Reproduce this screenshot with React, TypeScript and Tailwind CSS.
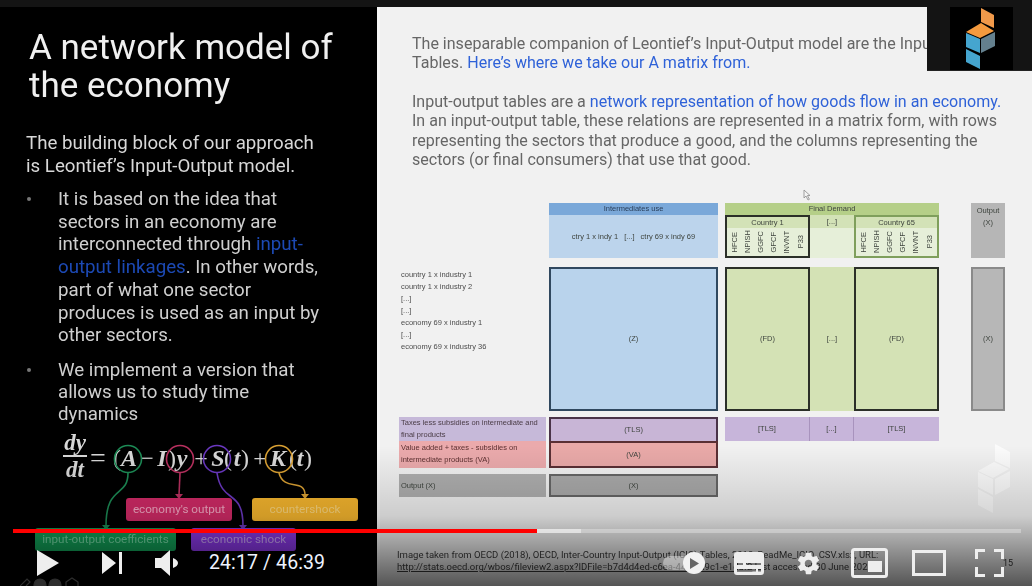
const sans = "font-['Roboto','Liberation_Sans',sans-serif]";

const demandCodes = ["HFCE", "NPISH", "GGFC", "GFCF", "INVNT", "P33"];

// each glyph is a zero-width box so the letters line up with the circles drawn over them
const equationGlyphs = [
  { text: "=", className: "ml-[11px] not-italic font-normal text-[28px]" },
  { text: "(", className: "ml-[19px] not-italic font-normal" },
  { text: "A", className: "ml-[12px]" },
  { text: "−", className: "ml-[18px] not-italic font-normal" },
  { text: "I", className: "ml-[15px]" },
  { text: ")", className: "ml-[10px] not-italic font-normal" },
  { text: "y", className: "ml-[10px]" },
  { text: "+", className: "ml-[19px] not-italic font-normal" },
  { text: "S", className: "ml-[17px]" },
  { text: "(", className: "ml-[10px] not-italic font-normal" },
  { text: "t", className: "ml-[9px]" },
  { text: ")", className: "ml-[8px] not-italic font-normal" },
  { text: "+", className: "ml-[15px] not-italic font-normal" },
  { text: "K", className: "ml-[18px]" },
  { text: "(", className: "ml-[15px] not-italic font-normal" },
  { text: "t", className: "ml-[7px]" },
  { text: ")", className: "ml-[8px] not-italic font-normal" },
];

function Bullet({ children }: { children: React.ReactNode }) {
  return (
    <li className="flex mt-3">
      <span className="w-[32px] shrink-0 pl-[1px] pt-[9px]">
        <span className="block w-[4px] h-[4px] rounded-full bg-[#777]" />
      </span>
      <span>{children}</span>
    </li>
  );
}

function Equation() {
  return (
    <div className="flex items-center h-[54px] mt-[6px] ml-[63px] font-['Liberation_Serif',serif] italic font-bold text-[24px] text-[#d8d8d8] leading-none">
      <span className="flex flex-col items-center w-[24px] text-[23px] -mt-[3px]">
        <span className="border-b-2 border-[#d8d8d8] w-full text-center pb-[1px]">dy</span>
        <span className="pt-[1px]">dt</span>
      </span>
      {equationGlyphs.map((glyph, i) => (
        <span key={i} className={`w-0 flex justify-center ${glyph.className}`}>
          {glyph.text}
        </span>
      ))}
    </div>
  );
}

function Annotations() {
  return (
    <>
      <svg className="absolute left-0 top-0" width="377" height="579" viewBox="0 7 377 579" fill="none" strokeWidth="1.6">
        <g stroke="#1c8a55">
          <circle cx="128" cy="459" r="13.5" />
          <path d="M128 473C128 498 106 484 106 526" />
        </g>
        <path d="M102 525h8l-4 5z" fill="#1c8a55" />
        <g stroke="#b8305f">
          <circle cx="180" cy="459" r="13.5" />
          <path d="M180 473L179 495" />
        </g>
        <path d="M175 494h8l-4 5z" fill="#b8305f" />
        <g stroke="#6a38c0">
          <circle cx="217" cy="459" r="13.5" />
          <path d="M217 473C222 505 243 488 243 526" />
        </g>
        <path d="M239 525h8l-4 5z" fill="#6a38c0" />
        <g stroke="#d9a033">
          <circle cx="279" cy="459" r="13.5" />
          <path d="M279 473C284 492 305 478 305 495" />
        </g>
        <path d="M301 494h8l-4 5z" fill="#d9a033" />
      </svg>
      <div className="absolute left-[126px] top-[491px] w-[106px] h-[23px] rounded-[3px] bg-[#d02a66] text-[#f4aac4] text-[11.7px] leading-[23px] text-center">economy's output</div>
      <div className="absolute left-[252px] top-[491px] w-[106px] h-[23px] rounded-[3px] bg-[#f6b62e] text-[#fbd67e] text-[11.7px] leading-[23px] text-center">countershock</div>
      <div className="absolute left-[35px] top-[521px] w-[141px] h-[23px] rounded-[3px] bg-[#12a058] text-[#74d8a4] text-[11.7px] leading-[23px] text-center">input-output coefficients</div>
      <div className="absolute left-[191px] top-[521px] w-[105px] h-[23px] rounded-[3px] bg-[#8a38e6] text-[#c8a4f4] text-[11.7px] leading-[23px] text-center">economic shock</div>
    </>
  );
}

function LeftSlide() {
  return (
    <div className={`relative w-[377px] shrink-0 bg-black pt-[22px] blur-[0.4px] ${sans}`}>
      <h1 className="pl-[29px] text-[35px] leading-[38px] text-[#f0f0f0] font-normal">
        A network model of
        <br />
        the economy
      </h1>
      <p className="mt-[27px] pl-[26px] text-[18.7px] leading-[22.5px] text-[#d8d8d8]">
        The building block of our approach
        <br />
        is Leontief’s Input-Output model.
      </p>
      <ul className="-mt-[1px] pl-[26px] pr-[40px] text-[18.7px] leading-[22.7px] text-[#cfcfcf]">
        <Bullet>
          It is based on the idea that
          <br />
          sectors in an economy are
          <br />
          interconnected through <span className="text-[#1c49b4]">input-</span>
          <br />
          <span className="text-[#1c49b4]">output linkages</span>. In other words,
          <br />
          part of what one sector
          <br />
          produces is used as an input by
          <br />
          other sectors.
        </Bullet>
        <Bullet>
          <span className="block leading-[22px]">
            We implement a version that
            <br />
            allows us to study time
            <br />
            dynamics
          </span>
        </Bullet>
      </ul>
      <Equation />
      <Annotations />
    </div>
  );
}

function MatrixCell({ className, children }: { className: string; children?: React.ReactNode }) {
  return <div className={`flex items-center justify-center ${className}`}>{children}</div>;
}

function CountryHead({ name, frame }: { name: string; frame: string }) {
  return (
    <div className={`w-[85px] h-full flex flex-col border-2 ${frame} bg-[#e6efd9]`}>
      <div className="h-[11px] bg-[#d3e2b7] text-center leading-[11px]">{name}</div>
      <div className="flex-1 flex justify-around px-[1px] items-center">
        {demandCodes.map((code) => (
          <span key={code} className="[writing-mode:vertical-rl] rotate-180 leading-none">
            {code}
          </span>
        ))}
      </div>
    </div>
  );
}

function Diagram() {
  return (
    <div className="ml-[19px] mt-[33.5px] grid grid-cols-[147px_3px_169px_7px_214px_32px_34px] grid-rows-[55px_9px_144px_6px_24px_27px_6px_23px] text-[7.5px] text-[#3c423c] font-['Liberation_Sans',sans-serif]">
      <div className="col-start-3 row-start-1 flex flex-col bg-[#bcd4ec]">
        <div className="h-[12px] bg-[#7aa8d9] text-center leading-[12px] text-[#2a3f5a]">Intermediates use</div>
        <div className="flex-1 flex items-center justify-center gap-[6px]">
          <span>ctry 1 x indy 1</span>
          <span>[...]</span>
          <span>ctry 69 x indy 69</span>
        </div>
      </div>

      <div className="col-start-5 row-start-1 flex flex-col">
        <div className="h-[12px] bg-[#b5cf88] text-center leading-[12px]">Final Demand</div>
        <div className="flex-1 flex">
          <CountryHead name="Country 1" frame="border-[#2b2f28]" />
          <div className="flex-1 flex flex-col bg-[#e6efd9]">
            <div className="h-[13px] bg-[#d3e2b7] text-center leading-[13px]">[...]</div>
          </div>
          <CountryHead name="Country 65" frame="border-[#7f9f5c]" />
        </div>
      </div>

      <div className="col-start-7 row-start-1 bg-[#b6b6b6] flex flex-col items-center pt-[2px] leading-[12px]">
        <span>Output</span>
        <span>(X)</span>
      </div>

      <div className="col-start-1 row-start-3 pl-[2px] pt-[2px] leading-[12px] text-[#4c4c4c]">
        <div>country 1 x industry 1</div>
        <div>country 1 x industry 2</div>
        <div>[...]</div>
        <div>[...]</div>
        <div>economy 69 x industry 1</div>
        <div>[...]</div>
        <div>economy 69 x industry 36</div>
      </div>
      <MatrixCell className="col-start-3 row-start-3 bg-[#b9d3ec] border-2 border-[#30485f]">(Z)</MatrixCell>
      <div className="col-start-5 row-start-3 flex bg-[#d4e2b5]">
        <MatrixCell className="w-[85px] border-2 border-[#2b2f28]">(FD)</MatrixCell>
        <MatrixCell className="flex-1">[...]</MatrixCell>
        <MatrixCell className="w-[85px] border-2 border-[#2b2f28]">(FD)</MatrixCell>
      </div>
      <MatrixCell className="col-start-7 row-start-3 bg-[#b7b7b7] border-2 border-[#8a8a8a]">(X)</MatrixCell>

      <div className="col-start-1 row-start-5 bg-[#c6b9d9] pl-[2px] leading-[12px] text-[#4a3c46]">
        Taxes less subsidies on intermediate and final products
      </div>
      <MatrixCell className="col-start-3 row-start-5 bg-[#c8b5d6] border-2 border-b-0 border-[#4a3348]">(TLS)</MatrixCell>
      <div className="col-start-5 row-start-5 flex bg-[#c7b5da] divide-x divide-[#a893bd]">
        <MatrixCell className="w-[85px]">[TLS]</MatrixCell>
        <MatrixCell className="flex-1">[...]</MatrixCell>
        <MatrixCell className="w-[85px]">[TLS]</MatrixCell>
      </div>

      <div className="col-start-1 row-start-6 bg-[#ebaaac] pl-[2px] pt-[1px] leading-[12px] text-[#5c3030]">
        Value added + taxes - subsidies on intermediate products (VA)
      </div>
      <MatrixCell className="col-start-3 row-start-6 bg-[#e9a9a8] border-2 border-[#5a2f34]">(VA)</MatrixCell>

      <div className="col-start-1 row-start-8 bg-[#aeaeae] pl-[2px] leading-[23px]">Output (X)</div>
      <MatrixCell className="col-start-3 row-start-8 bg-[#a9a9a9] border-2 border-[#666]">(X)</MatrixCell>
    </div>
  );
}

function RightSlide() {
  return (
    <div className={`relative flex-1 bg-[#f1f1f1] border-l-[3px] border-[#f8f8f8] ${sans}`}>
      <div className="blur-[0.35px]">
        <div className="pl-[32px] pt-[27px] text-[16.05px] leading-[19.3px] text-[#666]">
          <p>
            The inseparable companion of Leontief’s Input-Output model are the Input-Output
            <br />
            Tables. <span className="text-[#2f62d8]">Here’s where we take our A matrix from.</span>
          </p>
          <p className="mt-[19.5px]">
            Input-output tables are a <span className="text-[#2f62d8]">network representation of how goods flow in an economy.</span>
            <br />
            In an input-output table, these relations are represented in a matrix form, with rows
            <br />
            representing the sectors that produce a good, and the columns representing the
            <br />
            sectors (or final consumers) that use that good.
          </p>
        </div>
        <Diagram />
      </div>

      <div className="absolute left-[17px] top-[542px] w-[640px] text-[9.5px] leading-[12px] text-[#3c3c3c] whitespace-nowrap blur-[0.4px]">
        <div>Image taken from OECD (2018), OECD, Inter-Country Input-Output (ICIO) Tables, 2018, ReadMe_ICIO_CSV.xlsx, URL:</div>
        <div>
          <span className="underline">http://stats.oecd.org/wbos/fileview2.aspx?IDFile=b7d4d4ed-c6ea-44a0-a9c1-e1daf2</span>
          <span> last accessed 30 June 2020</span>
        </div>
      </div>
      <span className="absolute left-[623px] top-[550px] text-[9px] text-[#333] blur-[0.4px]">15</span>

      <svg className="absolute left-[595px] top-[437px]" width="40" height="76" viewBox="975 444 40 76" fill="#fff" fillOpacity="0.72">
        <path d="M995 444l15 8v16l-15-7z" />
        <path d="M978 471l16-9 15 7-16 9z" />
        <path d="M978 472l15 7v16l-15-8z" />
        <path d="M995 479l15-8v16l-15 8z" />
        <path d="M978 489l15 8v16l-15-8z" />
      </svg>

      <svg className="absolute left-[423px] top-[182px]" width="9" height="12" viewBox="0 0 9 12" fill="#f4f4f4" stroke="#8a8a8a" strokeWidth="0.8">
        <path d="M1 1v8l2-2 2 4 1.4-.7-2-3.8H7z" />
      </svg>
    </div>
  );
}

function LogoBadge() {
  return (
    <div className="absolute right-0 top-[7px] w-[105px] h-[64px] bg-[#141414] border-b border-[#222]">
      <div className="ml-[23px] w-[63px] h-full bg-black">
        <svg width="63" height="63" viewBox="950 7 63 63">
          <path d="M981 8l13 7v13l-13-6z" fill="#f0994a" />
          <path d="M966 32l15-9 13 8-14 7z" fill="#f49a3e" />
          <path d="M966 33l14 6v14l-14-6z" fill="#45a5cf" />
          <path d="M981 39l14-7v14l-14 7z" fill="#64808e" />
          <path d="M966 49l14 7v13l-14-7z" fill="#45a5cf" />
        </svg>
      </div>
    </div>
  );
}

function PlayerControls() {
  return (
    <div className="absolute left-0 bottom-0 w-full font-['Roboto','Liberation_Sans',sans-serif]">
      <div className="h-[140px] bg-gradient-to-b from-black/0 via-black/15 to-black/65 absolute left-0 right-0 bottom-0" />
      <svg className="absolute left-[20px] bottom-0" width="66" height="9" viewBox="0 0 66 9" fill="none" stroke="#2e2e2e" strokeWidth="1.2">
        <path d="M0 9l7-7 3 3-4 4" />
        <circle cx="20" cy="8" r="6" fill="#2e2e2e" />
        <circle cx="35" cy="8" r="6" fill="#2e2e2e" />
        <path d="M46 9v-4l6-4 6 4v4" />
      </svg>
      <div className="relative ml-[13px] mr-[11px] flex h-[4px] bg-white/30 mb-[11px]">
        <div className="w-[524px] bg-[#ff0000]" />
        <div className="w-[44px] bg-white/45" />
      </div>
      <div className="relative h-[38px] flex items-center text-[#eee]">
        <svg className="ml-[37px]" width="22" height="26" viewBox="0 0 22 26" fill="#eee">
          <path d="M0 0l22 13L0 26z" />
        </svg>
        <svg className="ml-[43px]" width="20" height="22" viewBox="0 0 20 22" fill="#eee">
          <path d="M0 0l14 11L0 22zM17 0h3v22h-3z" />
        </svg>
        <svg className="ml-[33px]" width="24" height="26" viewBox="0 0 24 26" fill="#eee">
          <path d="M0 8h6l9-8v26l-9-8H0zM18 8c3 1 5 3 5 5s-2 4-5 5z" />
        </svg>
        <span className="ml-[30px] w-[116px] text-[19.5px] tracking-[0.1px] text-[#eef3ff] whitespace-nowrap">24:17 / 46:39</span>

        <div className="ml-[338px] relative w-[42px] h-[22px]">
          <div className="absolute left-0 top-[4px] w-[36px] h-[14px] rounded-full bg-white/40" />
          <div className="absolute right-0 top-0 w-[22px] h-[22px] rounded-full bg-[#f2f2f2] flex items-center justify-center">
            <svg width="9" height="11" viewBox="0 0 9 11" fill="#666"><path d="M0 0l9 5.5L0 11z" /></svg>
          </div>
        </div>

        <svg className="ml-[29px]" width="30" height="23" viewBox="0 0 30 23" fill="#eee" fillRule="evenodd">
          <path d="M3 0h24a3 3 0 013 3v17a3 3 0 01-3 3H3a3 3 0 01-3-3V3a3 3 0 013-3zM3 11h6v2H3zM12 11h15v2H12zM3 17h19v2.500H3zM24 17h3v2.500h-3z" />
        </svg>
        <svg className="ml-[31px]" width="27" height="27" viewBox="8 8 20 20" fill="#eee">
          <path d="m23.94 18.78c.03-.25.05-.51.05-.78 0-.27-.02-.52-.05-.78l1.68-1.32c.15-.12.19-.33.09-.51l-1.6-2.76c-.09-.17-.31-.24-.48-.17l-1.99.8c-.41-.32-.86-.58-1.35-.78l-.3-2.12c-.02-.19-.19-.33-.39-.33h-3.2c-.2 0-.36.14-.39.33l-.3 2.12c-.48.2-.93.47-1.35.78l-1.99-.8c-.18-.07-.39 0-.48.17l-1.6 2.76c-.1.17-.05.39.09.51l1.68 1.32c-.03.25-.05.52-.05.78 0 .26.02.52.05.78l-1.68 1.32c-.15.12-.19.33-.09.51l1.6 2.76c.09.17.31.24.48.17l1.99-.8c.41.32.86.58 1.35.78l.3 2.12c.02.19.19.33.39.33h3.2c.2 0 .36-.14.39-.33l.3-2.12c.48-.2.93-.47 1.35-.78l1.99.8c.18.07.39 0 .48-.17l1.6-2.76c.09-.17.05-.39-.09-.51l-1.68-1.32zm-5.94 2.01c-1.54 0-2.8-1.25-2.8-2.8 0-1.54 1.25-2.8 2.8-2.8 1.54 0 2.8 1.25 2.8 2.8 0 1.54-1.25 2.8-2.8 2.8z" />
        </svg>
        <svg className="ml-[29px]" width="37" height="30" viewBox="0 0 37 30" fill="none">
          <rect x="1.500" y="1.500" width="34" height="27" rx="2" stroke="#eee" strokeWidth="3" />
          <rect x="17" y="13" width="14" height="11" fill="#eee" />
        </svg>
        <svg className="ml-[24px]" width="34" height="26" viewBox="0 0 34 26" fill="none">
          <rect x="1.500" y="1.500" width="31" height="23" stroke="#eee" strokeWidth="3" />
        </svg>
        <svg className="ml-[29px]" width="29" height="28" viewBox="0 0 29 28" fill="none" stroke="#eee" strokeWidth="3">
          <path d="M1.500 10V1.500H10M19 1.500h8.500V10M27.500 18v8.500H19M10 26.500H1.500V18" />
        </svg>
      </div>
      <div className="relative h-[4px]" />
    </div>
  );
}

export default function App() {
  return (
    <div className="relative w-[1032px] h-[586px] overflow-hidden bg-[#141414]">
      <div className="flex h-full pt-[7px]">
        <LeftSlide />
        <RightSlide />
      </div>
      <LogoBadge />
      <PlayerControls />
    </div>
  );
}
